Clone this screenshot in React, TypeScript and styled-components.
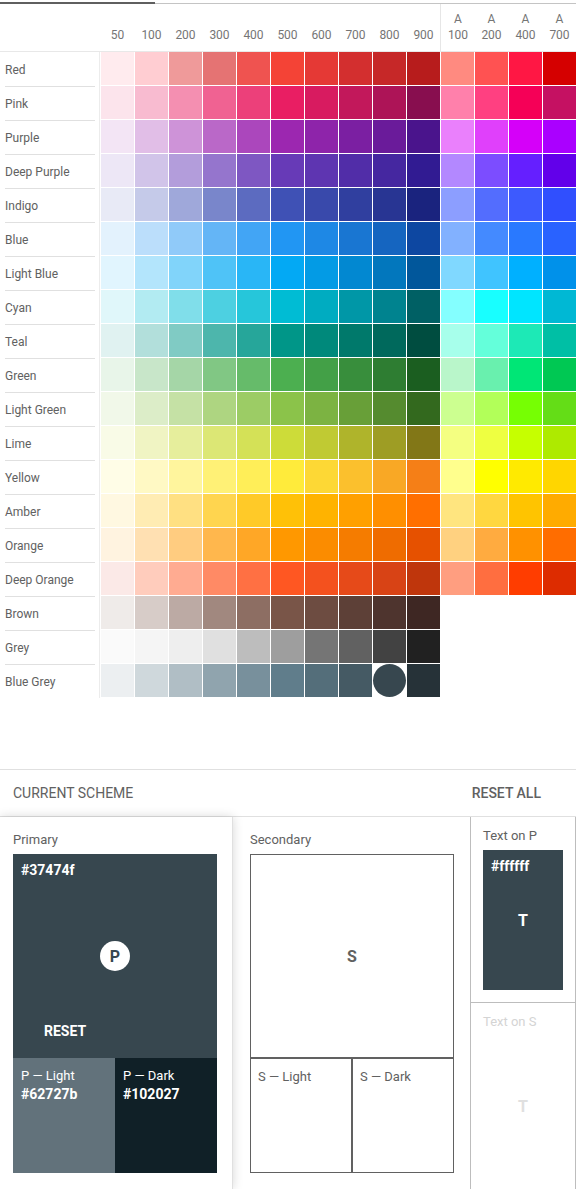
import React from "react";
import styled, { createGlobalStyle } from "styled-components";

const GlobalStyle = createGlobalStyle`
  html, body {
    margin: 0;
    padding: 0;
    overflow: hidden;
    background: #ffffff;
    font-family: Roboto, "Noto Sans", Arial, sans-serif;
  }
  * {
    box-sizing: border-box;
  }
`;

const shades = ["50", "100", "200", "300", "400", "500", "600", "700", "800", "900"];
const accents = ["100", "200", "400", "700"];

const palette: { name: string; colors: string[] }[] = [
  { name: "Red", colors: ["#ffebee", "#ffcdd2", "#ef9a9a", "#e57373", "#ef5350", "#f44336", "#e53935", "#d32f2f", "#c62828", "#b71c1c", "#ff8a80", "#ff5252", "#ff1744", "#d50000"] },
  { name: "Pink", colors: ["#fce4ec", "#f8bbd0", "#f48fb1", "#f06292", "#ec407a", "#e91e63", "#d81b60", "#c2185b", "#ad1457", "#880e4f", "#ff80ab", "#ff4081", "#f50057", "#c51162"] },
  { name: "Purple", colors: ["#f3e5f5", "#e1bee7", "#ce93d8", "#ba68c8", "#ab47bc", "#9c27b0", "#8e24aa", "#7b1fa2", "#6a1b9a", "#4a148c", "#ea80fc", "#e040fb", "#d500f9", "#aa00ff"] },
  { name: "Deep Purple", colors: ["#ede7f6", "#d1c4e9", "#b39ddb", "#9575cd", "#7e57c2", "#673ab7", "#5e35b1", "#512da8", "#4527a0", "#311b92", "#b388ff", "#7c4dff", "#651fff", "#6200ea"] },
  { name: "Indigo", colors: ["#e8eaf6", "#c5cae9", "#9fa8da", "#7986cb", "#5c6bc0", "#3f51b5", "#3949ab", "#303f9f", "#283593", "#1a237e", "#8c9eff", "#536dfe", "#3d5afe", "#304ffe"] },
  { name: "Blue", colors: ["#e3f2fd", "#bbdefb", "#90caf9", "#64b5f6", "#42a5f5", "#2196f3", "#1e88e5", "#1976d2", "#1565c0", "#0d47a1", "#82b1ff", "#448aff", "#2979ff", "#2962ff"] },
  { name: "Light Blue", colors: ["#e1f5fe", "#b3e5fc", "#81d4fa", "#4fc3f7", "#29b6f6", "#03a9f4", "#039be5", "#0288d1", "#0277bd", "#01579b", "#80d8ff", "#40c4ff", "#00b0ff", "#0091ea"] },
  { name: "Cyan", colors: ["#e0f7fa", "#b2ebf2", "#80deea", "#4dd0e1", "#26c6da", "#00bcd4", "#00acc1", "#0097a7", "#00838f", "#006064", "#84ffff", "#18ffff", "#00e5ff", "#00b8d4"] },
  { name: "Teal", colors: ["#e0f2f1", "#b2dfdb", "#80cbc4", "#4db6ac", "#26a69a", "#009688", "#00897b", "#00796b", "#00695c", "#004d40", "#a7ffeb", "#64ffda", "#1de9b6", "#00bfa5"] },
  { name: "Green", colors: ["#e8f5e9", "#c8e6c9", "#a5d6a7", "#81c784", "#66bb6a", "#4caf50", "#43a047", "#388e3c", "#2e7d32", "#1b5e20", "#b9f6ca", "#69f0ae", "#00e676", "#00c853"] },
  { name: "Light Green", colors: ["#f1f8e9", "#dcedc8", "#c5e1a5", "#aed581", "#9ccc65", "#8bc34a", "#7cb342", "#689f38", "#558b2f", "#33691e", "#ccff90", "#b2ff59", "#76ff03", "#64dd17"] },
  { name: "Lime", colors: ["#f9fbe7", "#f0f4c3", "#e6ee9c", "#dce775", "#d4e157", "#cddc39", "#c0ca33", "#afb42b", "#9e9d24", "#827717", "#f4ff81", "#eeff41", "#c6ff00", "#aeea00"] },
  { name: "Yellow", colors: ["#fffde7", "#fff9c4", "#fff59d", "#fff176", "#ffee58", "#ffeb3b", "#fdd835", "#fbc02d", "#f9a825", "#f57f17", "#ffff8d", "#ffff00", "#ffea00", "#ffd600"] },
  { name: "Amber", colors: ["#fff8e1", "#ffecb3", "#ffe082", "#ffd54f", "#ffca28", "#ffc107", "#ffb300", "#ffa000", "#ff8f00", "#ff6f00", "#ffe57f", "#ffd740", "#ffc400", "#ffab00"] },
  { name: "Orange", colors: ["#fff3e0", "#ffe0b2", "#ffcc80", "#ffb74d", "#ffa726", "#ff9800", "#fb8c00", "#f57c00", "#ef6c00", "#e65100", "#ffd180", "#ffab40", "#ff9100", "#ff6d00"] },
  { name: "Deep Orange", colors: ["#fbe9e7", "#ffccbc", "#ffab91", "#ff8a65", "#ff7043", "#ff5722", "#f4511e", "#e64a19", "#d84315", "#bf360c", "#ff9e80", "#ff6e40", "#ff3d00", "#dd2c00"] },
  { name: "Brown", colors: ["#efebe9", "#d7ccc8", "#bcaaa4", "#a1887f", "#8d6e63", "#795548", "#6d4c41", "#5d4037", "#4e342e", "#3e2723"] },
  { name: "Grey", colors: ["#fafafa", "#f5f5f5", "#eeeeee", "#e0e0e0", "#bdbdbd", "#9e9e9e", "#757575", "#616161", "#424242", "#212121"] },
  { name: "Blue Grey", colors: ["#eceff1", "#cfd8dc", "#b0bec5", "#90a4ae", "#78909c", "#607d8b", "#546e7a", "#455a64", "#37474f", "#263238"] },
];

const Page = styled.div`
  width: 576px;
  height: 1189px;
  overflow: hidden;
  color: #616161;
`;

const TabBar = styled.div`
  display: flex;
  align-items: flex-start;
  height: 4px;
`;

const TabIndicator = styled.div`
  width: 155px;
  height: 2px;
  margin-top: 2px;
  background: #5f5f5f;
`;

const TabTrack = styled.div`
  flex: 1;
  height: 1px;
  margin-top: 3px;
  background: #c4c4c4;
`;

const GridRow = styled.div`
  display: grid;
  grid-template-columns: 100px repeat(14, 34px);
`;

const HeaderRow = styled(GridRow)`
  height: 48px;
  border-bottom: 1px solid #e8e8e8;
`;

const HeaderCell = styled.div<{ $divider?: boolean }>`
  display: flex;
  flex-direction: column;
  justify-content: flex-end;
  align-items: center;
  padding-bottom: 8px;
  padding-left: 1px;
  font-size: 12px;
  line-height: 16px;
  color: #757575;
  border-left: ${(p) => (p.$divider ? "1px solid #e6e6e6" : "none")};
`;

const LabelCell = styled.div`
  height: 34px;
  border-right: 1px solid #ececec;
  padding: 0 4px 0 5px;
`;

const LabelText = styled.div<{ $first?: boolean }>`
  height: 34px;
  padding-top: 1px;
  display: flex;
  align-items: center;
  font-size: 12px;
  color: #616161;
  border-top: ${(p) => (p.$first ? "none" : "1px solid #e0e0e0")};
`;

const Cell = styled.div`
  width: 34px;
  height: 34px;
  padding: 0 0 1px 1px;
`;

const Chip = styled.div<{ $selected?: boolean }>`
  width: 100%;
  height: 100%;
  border-radius: ${(p) => (p.$selected ? "50%" : "0")};
`;

const SchemeBar = styled.div`
  margin-top: 71px;
  height: 47px;
  border-top: 1px solid #e0e0e0;
  display: flex;
  align-items: center;
  justify-content: space-between;
  padding: 0 35px 0 13px;
`;

const SchemeTitle = styled.div`
  font-size: 14px;
  color: #616161;
  text-transform: uppercase;
`;

const ResetAll = styled.div`
  font-size: 14px;
  font-weight: 500;
  color: #616161;
`;

const Panels = styled.div`
  display: flex;
  border-top: 1px solid #e0e0e0;
  height: 373px;
`;

const PrimaryCard = styled.div`
  position: relative;
  z-index: 1;
  width: 233px;
  padding: 15px 0 0 13px;
  background: #fff;
  border-right: 1px solid #e0e0e0;
  box-shadow: 0 0 10px rgba(0, 0, 0, 0.16);
`;

const SecondaryPanel = styled.div`
  width: 237px;
  padding: 15px 0 0 17px;
`;

const PanelLabel = styled.div<{ $muted?: boolean }>`
  font-size: 13px;
  line-height: 16px;
  margin-bottom: 6px;
  color: ${(p) => (p.$muted ? "#d4d4d4" : "#616161")};
`;

const MainSwatch = styled.div<{ $bg: string; $outlined?: boolean }>`
  width: 204px;
  height: 204px;
  display: grid;
  background: ${(p) => p.$bg};
  border: ${(p) => (p.$outlined ? "1px solid #616161" : "none")};
  & > * {
    grid-area: 1 / 1;
  }
`;

const HexTop = styled.div<{ $color?: string }>`
  align-self: start;
  justify-self: start;
  margin: 8px;
  font-size: 14px;
  line-height: 16px;
  font-weight: 700;
  color: ${(p) => p.$color || "#fff"};
`;

const Centered = styled.div<{ $color: string }>`
  place-self: center;
  font-size: 16px;
  font-weight: 700;
  color: ${(p) => p.$color};
`;

const Badge = styled.div`
  place-self: center;
  width: 30px;
  height: 30px;
  border-radius: 50%;
  background: #fff;
  color: #37474f;
  display: flex;
  align-items: center;
  justify-content: center;
  font-size: 16px;
  font-weight: 700;
`;

const ResetButton = styled.div`
  align-self: end;
  justify-self: start;
  margin: 0 0 19px 31px;
  font-size: 14px;
  line-height: 16px;
  font-weight: 700;
  color: #fff;
`;

const VariantRow = styled.div`
  display: flex;
  width: 204px;
`;

const Variant = styled.div<{ $bg: string; $outlined?: boolean }>`
  width: 102px;
  height: 115px;
  padding: ${(p) => (p.$outlined ? "8px 7px" : "8px 8px")};
  background: ${(p) => p.$bg};
  border: ${(p) => (p.$outlined ? "1px solid #616161" : "none")};
  color: ${(p) => (p.$outlined ? "#616161" : "#fff")};
`;

const VariantName = styled.div`
  font-size: 13px;
  line-height: 19px;
`;

const VariantHex = styled.div`
  font-size: 14px;
  line-height: 19px;
  font-weight: 700;
`;

const TextColumn = styled.div`
  width: 106px;
  display: flex;
  flex-direction: column;
  border-left: 1px solid #bdbdbd;
  border-right: 1px solid #bdbdbd;
`;

const TextCell = styled.div<{ $last?: boolean }>`
  padding: 11px 12px 12px 12px;
  border-bottom: ${(p) => (p.$last ? "none" : "1px solid #bdbdbd")};
`;

const TextSwatch = styled.div<{ $bg: string }>`
  width: 80px;
  height: 140px;
  display: grid;
  background: ${(p) => p.$bg};
  & > * {
    grid-area: 1 / 1;
  }
`;

export default function App() {
  return (
    <Page>
      <GlobalStyle />
      <TabBar>
        <TabIndicator />
        <TabTrack />
      </TabBar>

      <HeaderRow>
        <div />
        {shades.map((s) => (
          <HeaderCell key={s}>{s}</HeaderCell>
        ))}
        {accents.map((a, i) => (
          <HeaderCell key={"A" + a} $divider={i === 0}>
            <span>A</span>
            <span>{a}</span>
          </HeaderCell>
        ))}
      </HeaderRow>

      {palette.map((row, ri) => (
        <GridRow key={row.name}>
          <LabelCell>
            <LabelText $first={ri === 0}>{row.name}</LabelText>
          </LabelCell>
          {row.colors.map((c, ci) => (
            <Cell key={ci}>
              <Chip
                style={{ background: c }}
                $selected={row.name === "Blue Grey" && ci === 8}
              />
            </Cell>
          ))}
        </GridRow>
      ))}

      <SchemeBar>
        <SchemeTitle>Current Scheme</SchemeTitle>
        <ResetAll>RESET ALL</ResetAll>
      </SchemeBar>

      <Panels>
        <PrimaryCard>
          <PanelLabel>Primary</PanelLabel>
          <MainSwatch $bg="#37474f">
            <HexTop>#37474f</HexTop>
            <Badge>P</Badge>
            <ResetButton>RESET</ResetButton>
          </MainSwatch>
          <VariantRow>
            <Variant $bg="#62727b">
              <VariantName>P — Light</VariantName>
              <VariantHex>#62727b</VariantHex>
            </Variant>
            <Variant $bg="#102027">
              <VariantName>P — Dark</VariantName>
              <VariantHex>#102027</VariantHex>
            </Variant>
          </VariantRow>
        </PrimaryCard>

        <SecondaryPanel>
          <PanelLabel>Secondary</PanelLabel>
          <MainSwatch $bg="#ffffff" $outlined>
            <Centered $color="#616161">S</Centered>
          </MainSwatch>
          <VariantRow>
            <Variant $bg="#ffffff" $outlined>
              <VariantName>S — Light</VariantName>
            </Variant>
            <Variant $bg="#ffffff" $outlined>
              <VariantName>S — Dark</VariantName>
            </Variant>
          </VariantRow>
        </SecondaryPanel>

        <TextColumn>
          <TextCell>
            <PanelLabel>Text on P</PanelLabel>
            <TextSwatch $bg="#37474f">
              <HexTop>#ffffff</HexTop>
              <Centered $color="#ffffff">T</Centered>
            </TextSwatch>
          </TextCell>
          <TextCell $last>
            <PanelLabel $muted>Text on S</PanelLabel>
            <TextSwatch $bg="#ffffff">
              <Centered $color="#e0e0e0">T</Centered>
            </TextSwatch>
          </TextCell>
        </TextColumn>
      </Panels>
    </Page>
  );
}
